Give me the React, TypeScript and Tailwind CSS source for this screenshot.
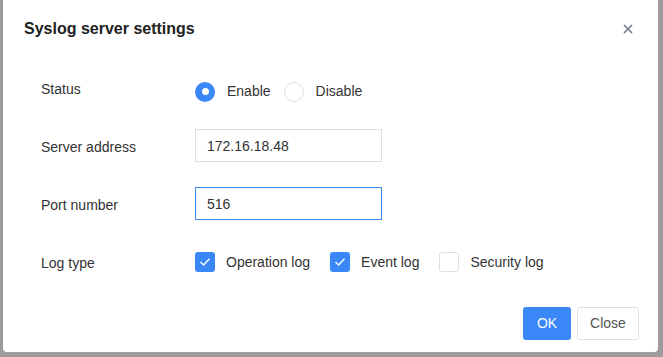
import { useState } from "react";

const FONT = { fontFamily: '"Liberation Sans", Arial, sans-serif' };

function Radio({ checked, label }: { checked: boolean; label: string }) {
    return (
        <label className="flex items-center">
            {checked ? (
                <span className="w-5 h-5 rounded-full bg-[#3a87f8] flex items-center justify-center">
                    <span className="w-[7px] h-[7px] rounded-full bg-white" />
                </span>
            ) : (
                <span className="w-5 h-5 rounded-full border border-[#dcdfe6] bg-white" />
            )}
            <span className="ml-3 text-[14px] text-[#333]">{label}</span>
        </label>
    );
}

function Check({ checked, label }: { checked: boolean; label: string }) {
    return (
        <label className="flex items-center">
            {checked ? (
                <span className="w-5 h-5 rounded-[3px] bg-[#3a87f8] flex items-center justify-center">
                    <svg width="12" height="10" viewBox="0 0 12 10" fill="none">
                        <path d="M1.5 5 L4.6 8 L10.5 1.8" stroke="white" strokeWidth="1.4" />
                    </svg>
                </span>
            ) : (
                <span className="w-5 h-5 rounded-[3px] border border-[#dcdfe6] bg-white" />
            )}
            <span className="ml-[11px] text-[14px] text-[#333]">{label}</span>
        </label>
    );
}

function Row({ label, children, labelClass = "mt-[3px]" }: { label: string; children: React.ReactNode; labelClass?: string }) {
    return (
        <div className="flex items-center h-[33px]">
            <div className={"w-[154px] text-[14px] text-[#333] " + labelClass}>{label}</div>
            {children}
        </div>
    );
}

export default function App() {
    const [addr] = useState("172.16.18.48");
    const [port] = useState("516");

    return (
        <div className="w-[663px] h-[357px] bg-[#9c9c9c] pl-[3px] pr-[5px] pb-[5px]" style={FONT}>
            <div className="w-full h-full bg-white rounded-b-[4px] flex flex-col">
                <div className="flex items-center justify-between pl-[21px] pr-[25px] pt-[17px]">
                    <div className="text-[16px] font-bold text-[#222]">Syslog server settings</div>
                    <svg width="10" height="10" viewBox="0 0 10 10">
                        <path d="M1 1 L9 9 M9 1 L1 9" stroke="#6b7a8a" strokeWidth="1.6" />
                    </svg>
                </div>
                <div className="pl-[38px] pt-[30px] flex flex-col gap-[25px]">
                    <Row label="Status" labelClass="mt-[4px]">
                        <div className="flex items-center gap-[13px] mt-[8px]">
                            <Radio checked label="Enable" />
                            <Radio checked={false} label="Disable" />
                        </div>
                    </Row>
                    <Row label="Server address">
                        <input
                            readOnly
                            value={addr}
                            className="w-[187px] h-[33px] border border-[#dcdfe6] px-[11px] text-[14px] text-[#333] outline-none"
                        />
                    </Row>
                    <Row label="Port number">
                        <input
                            readOnly
                            value={port}
                            className="w-[187px] h-[33px] border border-[#3a87f8] px-[11px] text-[14px] text-[#333] outline-none"
                        />
                    </Row>
                    <Row label="Log type">
                        <div className="flex items-center gap-[20px] mt-[1px]">
                            <Check checked label="Operation log" />
                            <Check checked label="Event log" />
                            <Check checked={false} label="Security log" />
                        </div>
                    </Row>
                </div>
                <div className="mt-auto flex justify-end gap-[6px] pr-[19px] pb-[12px]">
                    <button className="w-[48px] h-[33px] rounded-[3px] bg-[#3a87f8] text-white text-[14px]">OK</button>
                    <button className="w-[62px] h-[33px] rounded-[3px] border border-[#dcdfe6] bg-white text-[#555] text-[14px]">Close</button>
                </div>
            </div>
        </div>
    );
}
